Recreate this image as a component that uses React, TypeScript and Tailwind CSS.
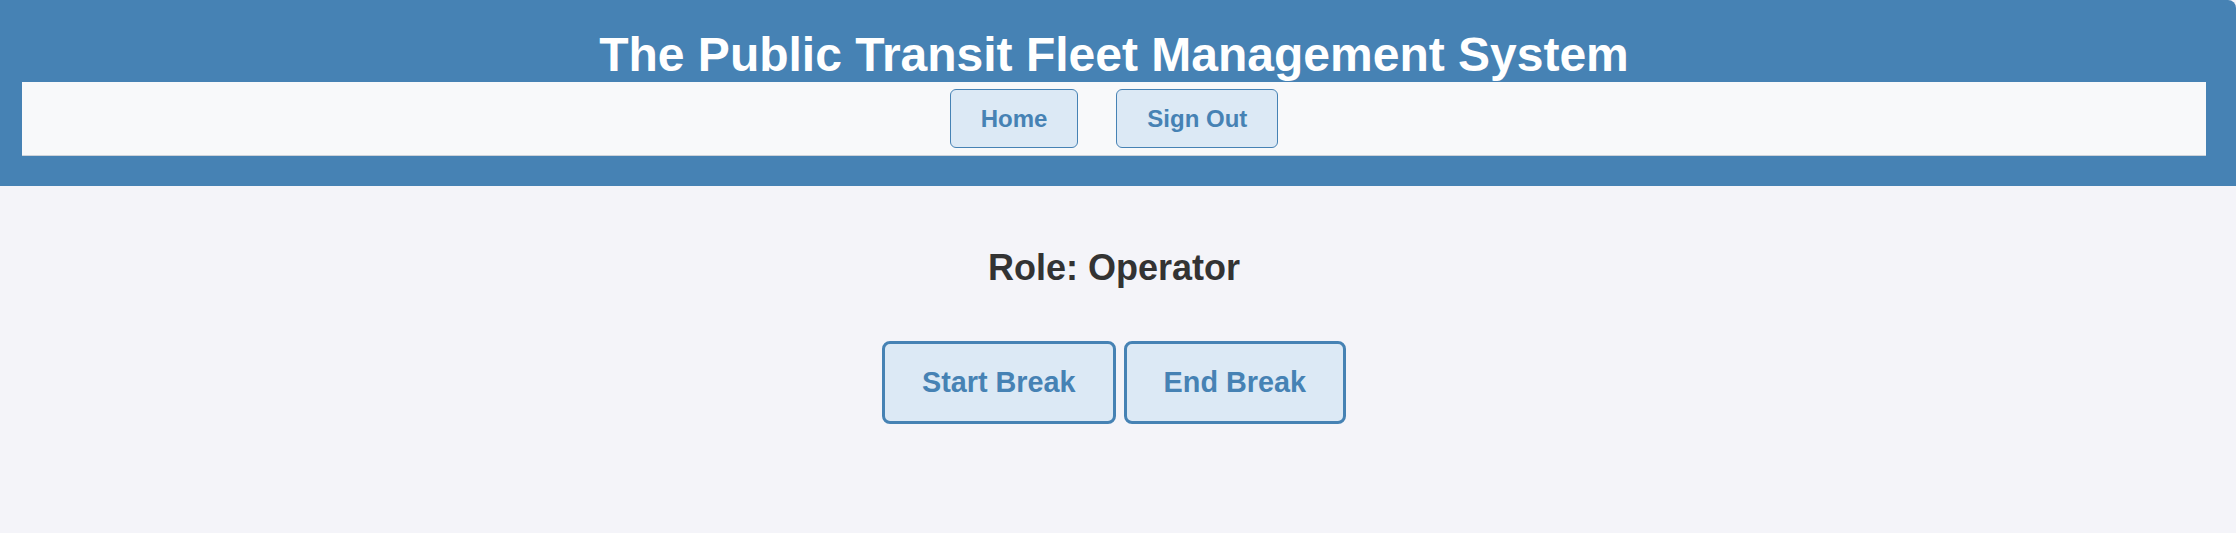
import { FC } from 'react';

const NavButton: FC<{ label: string }> = ({ label }) => (
  <button className="h-[59px] px-[30px] rounded-md border border-[#4682b4] bg-[#dce9f5] text-[24px] font-bold text-[#4682b4]">
    {label}
  </button>
);

const BreakButton: FC<{ label: string }> = ({ label }) => (
  <button className="h-[83px] px-[37px] rounded-lg border-[3px] border-[#4682b4] bg-[#dce9f5] text-[28.8px] font-bold text-[#4682b4]">
    {label}
  </button>
);

const App: FC = () => (
  <div className="min-h-screen bg-[#f4f4f9] font-['Liberation_Sans',Arial,sans-serif]">
    <header className="bg-[#4682b4] pl-[22px] pr-[30px] pt-[28px] pb-[30px] rounded-tr-lg">
      <h1 className="text-center text-[48px] leading-[54px] font-bold text-white">
        The Public Transit Fleet Management System
      </h1>
      <nav className="h-[74px] bg-[#f8f9fa] border-b border-[#cdd3da] flex items-center justify-center gap-[38px]">
        <NavButton label="Home" />
        <NavButton label="Sign Out" />
      </nav>
    </header>
    <main className="pr-[8px] pt-[61px] flex flex-col items-center">
      <h2 className="text-[36px] leading-[41px] font-bold text-[#333333]">Role: Operator</h2>
      <div className="mt-[53px] flex gap-[8px]">
        <BreakButton label="Start Break" />
        <BreakButton label="End Break" />
      </div>
    </main>
  </div>
);

export default App;
